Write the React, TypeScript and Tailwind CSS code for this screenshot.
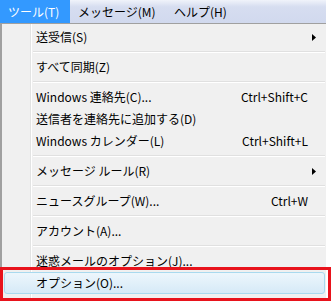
import React from "react";

type Item =
  | { kind: "sep" }
  | { kind: "item"; label: string; shortcut?: string; sub?: boolean; hover?: boolean };

const items: Item[] = [
  { kind: "item", label: "送受信(S)", sub: true },
  { kind: "sep" },
  { kind: "item", label: "すべて同期(Z)" },
  { kind: "sep" },
  { kind: "item", label: "Windows 連絡先(C)...", shortcut: "Ctrl+Shift+C" },
  { kind: "item", label: "送信者を連絡先に追加する(D)" },
  { kind: "item", label: "Windows カレンダー(L)", shortcut: "Ctrl+Shift+L" },
  { kind: "sep" },
  { kind: "item", label: "メッセージ ルール(R)", sub: true },
  { kind: "sep" },
  { kind: "item", label: "ニュースグループ(W)...", shortcut: "Ctrl+W" },
  { kind: "sep" },
  { kind: "item", label: "アカウント(A)..." },
  { kind: "sep" },
  { kind: "item", label: "迷惑メールのオプション(J)..." },
  { kind: "item", label: "オプション(O)...", hover: true },
];

const SubArrow = () => (
  <svg width="4" height="7" viewBox="0 0 4 7" className="absolute right-[10px] top-[8px]">
    <path d="M0 0 L4 3.5 L0 7 Z" fill="#000" />
  </svg>
);

const MenuRow = ({ item }: { item: Item }) => {
  if (item.kind === "sep") {
    return (
      <div className="h-[8px] flex items-center pl-[31px] pr-[1px]">
        <div className="w-full border-t border-[#e0e0e0] border-b border-b-white" />
      </div>
    );
  }
  if (item.hover) {
    return (
      <div className="relative h-[22px] ml-[2px] mr-[1px] flex items-center pl-[31px] pr-[18px] rounded-[3px] border border-[#a9d9ee] bg-linear-to-b from-[#edf6fc] to-[#d6eaf7]">
        <span className="flex-1 whitespace-nowrap">{item.label}</span>
      </div>
    );
  }
  return (
    <div className="relative h-[22px] flex items-center pl-[34px] pr-[18px]">
      <span className="flex-1 whitespace-nowrap">{item.label}</span>
      {item.shortcut && <span className="whitespace-nowrap">{item.shortcut}</span>}
      {item.sub && <SubArrow />}
    </div>
  );
};

export default function App() {
  return (
    <div
      className="relative w-[336px] h-[305px] bg-white overflow-hidden text-[12px] text-black leading-none"
      style={{ fontFamily: '"Noto Sans CJK JP", "Noto Sans", sans-serif' }}
    >
      <div className="w-[326px]">
        <div className="h-[24px] flex bg-linear-to-b from-[#f0f3fa] via-[#d6ddf0] via-30% to-[#d1d9ee] border-b border-[#a0a0a0]">
          <div className="h-full w-[70px] pl-[8px] flex items-center bg-[#3399ff] text-white">ツール(T)</div>
          <div className="h-full w-[96px] pl-[8px] flex items-center">メッセージ(M)</div>
          <div className="h-full pl-[8px] flex items-center">ヘルプ(H)</div>
        </div>
        <div className="relative bg-[#f0f0f0] border-l-2 border-[#a0a0a0] pt-[2px] pb-[6px]">
          <div className="absolute left-[28px] top-0 bottom-0 w-[2px] border-l border-[#e2e3e3] border-r border-r-white" />
          <div className="relative">
            {items.map((it, i) => (
              <MenuRow key={i} item={it} />
            ))}
          </div>
        </div>
      </div>
      <div className="absolute left-0 top-[267px] w-[331px] h-[34px] border-[3px] border-[#e8131c]" />
    </div>
  );
}
